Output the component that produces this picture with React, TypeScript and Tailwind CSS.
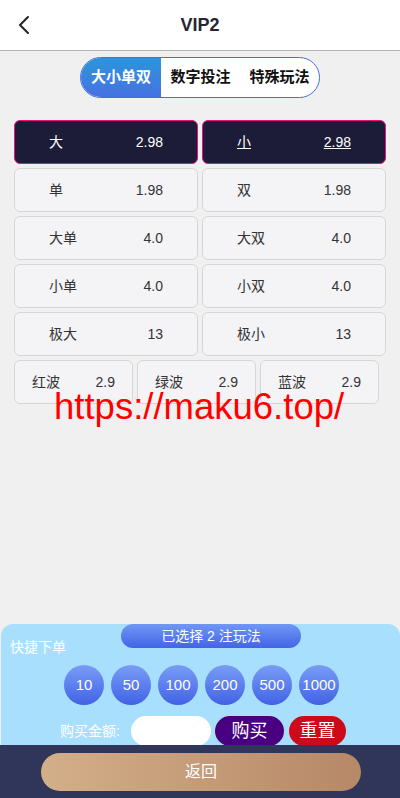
import React from "react";

const two: [string, string, boolean][][] = [
  [["大", "2.98", true], ["小", "2.98", true]],
  [["单", "1.98", false], ["双", "1.98", false]],
  [["大单", "4.0", false], ["大双", "4.0", false]],
  [["小单", "4.0", false], ["小双", "4.0", false]],
  [["极大", "13", false], ["极小", "13", false]],
];

const three = [["红波", "2.9"], ["绿波", "2.9"], ["蓝波", "2.9"]];
const chips = ["10", "50", "100", "200", "500", "1000"];

export default function App() {
  return (
    <div
      className="relative w-[400px] h-[798px] bg-[#f0f0f0] flex flex-col overflow-hidden"
      style={{ fontFamily: '"Liberation Sans", "Noto Sans CJK SC", sans-serif' }}
    >
      <div className="h-[51px] bg-white border-b border-[#b5b5b5] flex items-center justify-center relative shrink-0">
        <svg className="absolute left-[17px] top-[15px]" width="14" height="20" viewBox="0 0 14 20">
          <path d="M11 2 L3 10 L11 18" fill="none" stroke="#222" strokeWidth="2" strokeLinecap="round" strokeLinejoin="round" />
        </svg>
        <span className="text-[18px] font-bold text-[#262633]">VIP2</span>
      </div>

      <div className="flex justify-center mt-[6px] shrink-0">
        <div className="flex h-[41px] w-[240px] rounded-full border border-[#4a6ce0] overflow-hidden bg-white">
          <div className="w-[80px] flex items-center justify-center bg-gradient-to-b from-[#2796d9] to-[#4670e2] text-white font-bold text-[15px]">
            大小单双
          </div>
          <div className="flex-1 flex items-center justify-center text-[#111] font-bold text-[15px]">数字投注</div>
          <div className="flex-1 flex items-center justify-center text-[#111] font-bold text-[15px]">特殊玩法</div>
        </div>
      </div>

      <div className="px-[14px] mt-[22px] flex flex-col gap-[4px] shrink-0">
        {two.map((row, i) => (
          <div key={i} className="flex gap-[4px]">
            {row.map(([n, o, sel], j) => (
              <div
                key={j}
                className={
                  sel
                    ? "w-[184px] h-[44px] rounded-[6px] border border-[#e3147d] bg-[#1c1c38] text-white flex items-center justify-between px-[34px] text-[14px]"
                    : "w-[184px] h-[44px] rounded-[6px] border border-[#d6d6d6] bg-[#f4f4f6] text-[#333] flex items-center justify-between px-[34px] text-[14px]"
                }
              >
                <span className={j === 1 && sel ? "underline" : ""}>{n}</span>
                <span className={j === 1 && sel ? "underline" : ""}>{o}</span>
              </div>
            ))}
          </div>
        ))}
        <div className="flex gap-[4px]">
          {three.map(([n, o], j) => (
            <div
              key={j}
              className="w-[119px] h-[44px] rounded-[6px] border border-[#d6d6d6] bg-[#f4f4f6] text-[#333] flex items-center justify-between px-[17px] text-[14px]"
            >
              <span>{n}</span>
              <span>{o}</span>
            </div>
          ))}
        </div>
      </div>

      <div className="flex-1" />

      <div className="relative h-[121px] ml-[1px] rounded-t-[12px] bg-[#a8dffd] overflow-hidden shrink-0">
        <div className="absolute left-[9px] top-[13px] text-white text-[14px]">快捷下单</div>
        <div className="flex pl-[120px]">
          <div className="w-[180px] h-[24px] rounded-full bg-gradient-to-b from-[#7097f5] to-[#4563e6] text-white text-[14px] flex items-center justify-center">
            已选择 2 注玩法
          </div>
        </div>
        <div className="flex gap-[7px] mt-[17px] pl-[63px]">
          {chips.map((c) => (
            <div
              key={c}
              className="w-[40px] h-[40px] rounded-full bg-gradient-to-b from-[#7a9cf6] to-[#4361e6] text-white text-[15px] flex items-center justify-center"
            >
              {c}
            </div>
          ))}
        </div>
        <div className="flex items-center mt-[11px] h-[30px]">
          <span className="w-[130px] text-right pr-[11px] text-white text-[14px]">购买金额:</span>
          <div className="w-[80px] h-[30px] rounded-full bg-white" />
          <div className="ml-[4px] w-[69px] h-[30px] rounded-full bg-[#480080] text-white text-[18px] flex items-center justify-center">
            购买
          </div>
          <div className="ml-[5px] w-[57px] h-[30px] rounded-full bg-[#cc0a19] text-white text-[18px] flex items-center justify-center">
            重置
          </div>
        </div>
      </div>

      <div className="h-[53px] bg-[#2f3659] flex items-center justify-center shrink-0">
        <div className="w-[320px] h-[38px] rounded-full bg-gradient-to-r from-[#d3af89] to-[#b68867] text-white text-[16px] flex items-center justify-center ml-[2px]">
          返回
        </div>
      </div>

      <div
        className="absolute left-[54px] top-[389px] text-[#ff0000] text-[36.5px] leading-none pointer-events-none"
        style={{ fontFamily: '"Liberation Sans", sans-serif' }}
      >
        https://maku6.top/
      </div>
    </div>
  );
}
